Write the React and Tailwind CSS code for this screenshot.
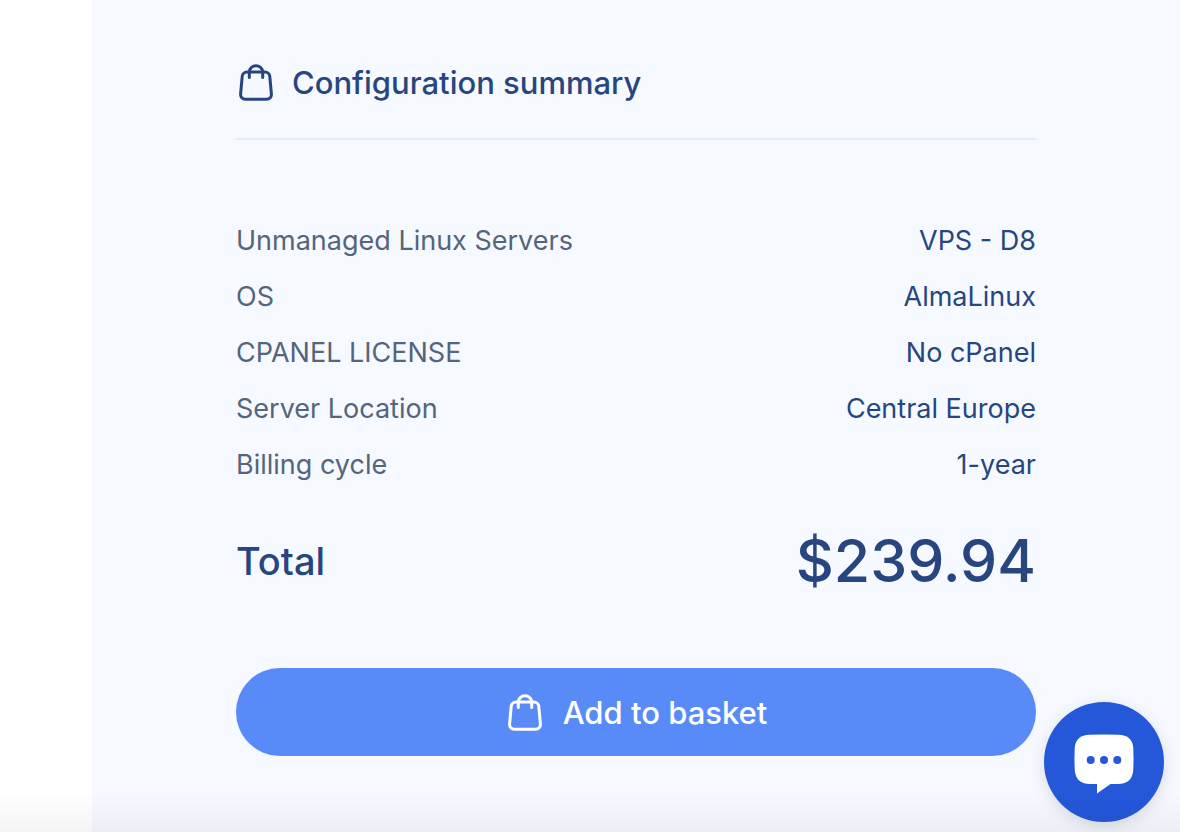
const rows = [
  ["Unmanaged Linux Servers", "VPS - D8"],
  ["OS", "AlmaLinux"],
  ["CPANEL LICENSE", "No cPanel"],
  ["Server Location", "Central Europe"],
  ["Billing cycle", "1-year"],
];

function BagIcon() {
  return (
    <svg className="h-10 w-10 shrink-0" viewBox="0 0 40 40" fill="none" stroke="currentColor" strokeWidth="3" strokeLinecap="round" strokeLinejoin="round" aria-hidden="true">
      <path d="M11 9h18a4.800 4.800 0 0 1 4.800 4.400l1.600 17.600a4.800 4.800 0 0 1-4.800 5.300H9.400a4.800 4.800 0 0 1-4.800-5.300l1.600-17.600A4.800 4.800 0 0 1 11 9z" />
      <path d="M13.300 14.400V9a6.700 6.200 0 0 1 13.400 0v5.400" />
    </svg>
  );
}

export default function App() {
  return (
    <div className="min-h-screen bg-white pl-[92px] font-['Inter',sans-serif] text-[#27467f]">
      <main className="min-h-screen bg-[#f6f9ff] px-36 pt-[63px]">
        <header className="flex items-center gap-4 border-b-2 border-[#e5e9f4] pb-[35px]">
          <BagIcon />
          <h1 className="text-[31px] leading-10 font-medium">Configuration summary</h1>
        </header>
        <dl className="mt-[73px]">
          {rows.map(([label, value]) => (
            <div key={label} className="flex h-14 items-center justify-between text-[27px] leading-10">
              <dt className="text-[#54657c]">{label}</dt>
              <dd>{value}</dd>
            </div>
          ))}
          <div className="mt-7 flex h-20 items-center justify-between font-medium">
            <dt className="text-[38px] leading-[60px]">Total</dt>
            <dd className="text-[59px] leading-[80px]">$239.94</dd>
          </div>
        </dl>
        <button type="button" className="mt-[67px] flex h-[88px] w-full items-center justify-center gap-[18px] rounded-full bg-[#598bf8] pt-0.5 text-[31px] font-medium text-white">
          <BagIcon />
          Add to basket
        </button>
      </main>
      <button type="button" aria-label="Open chat" className="fixed right-4 bottom-[10px] flex h-[120px] w-[120px] items-center justify-center rounded-full bg-[#2458d9] shadow-[0_4px_16px_rgba(0,0,0,0.12)]">
        <svg className="h-16 w-16" viewBox="0 0 64 64" aria-hidden="true">
          <path fill="#fff" d="M18 4.800Q32 4 46 4.800Q61 5 61.300 19Q61.800 29 61.300 39Q61 53.500 46 54H38.500L25 63.500V54H18Q3 53.500 2.700 39Q2.200 29 2.700 19Q3 5 18 4.800z" />
          <g fill="#2458d9"><circle cx="18.700" cy="30" r="4" /><circle cx="32" cy="30" r="4" /><circle cx="45.300" cy="30" r="4" /></g>
        </svg>
      </button>
      <div aria-hidden="true" className="pointer-events-none fixed inset-x-0 bottom-0 h-10 bg-linear-to-b from-transparent to-black/4" />
    </div>
  );
}
